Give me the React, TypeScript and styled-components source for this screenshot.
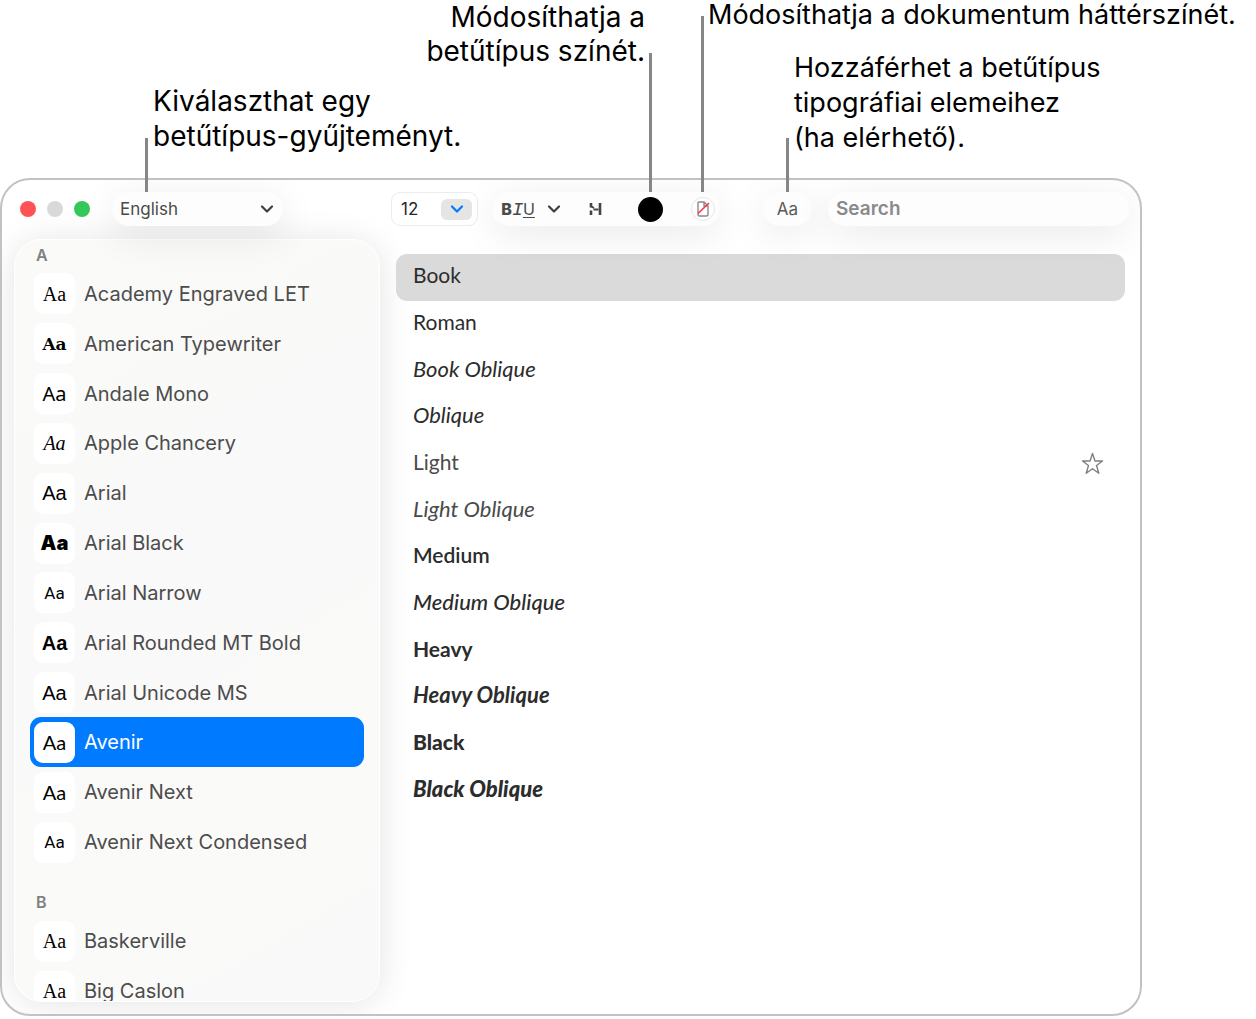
import React from "react";
import styled, { createGlobalStyle } from "styled-components";

const ui = `Inter, "Noto Sans", sans-serif`;

const GlobalStyle = createGlobalStyle`
  *, *::before, *::after { box-sizing: border-box; }
  body { margin: 0; background: #fff; font-family: ${ui}; }
  button, input, select { font: inherit; color: inherit; }
  ul, h2 { margin: 0; padding: 0; }
  ul { list-style: none; }
`;

const Figure = styled.main`
  position: relative;
  padding: 178px 114px 4px 0;
`;

const Callout = styled.p<{
  $left: number;
  $top: number;
  $width: number;
  $size?: number;
  $leading?: number;
  $align?: string;
}>`
  position: absolute;
  left: ${(p) => p.$left}px;
  top: ${(p) => p.$top}px;
  width: ${(p) => p.$width}px;
  margin: 0;
  text-align: ${(p) => p.$align ?? "left"};
  white-space: nowrap;
  font-size: ${(p) => p.$size ?? 27}px;
  line-height: ${(p) => p.$leading ?? 35}px;
  color: #000;
`;

const Leader = styled.span<{ $left: number; $top: number }>`
  position: absolute;
  z-index: 3;
  left: ${(p) => p.$left}px;
  top: ${(p) => p.$top}px;
  width: 3px;
  height: ${(p) => 192 - p.$top}px;
  background: #868686;
`;

const Window = styled.section`
  border: 2px solid #c2c2c2;
  border-radius: 30px;
  background: #fff;
  overflow: hidden;
`;

const Toolbar = styled.header`
  position: relative;
  z-index: 2;
  display: flex;
  align-items: center;
  height: 58px;
  padding: 0 11px 0 18px;
`;

const Lights = styled.div`
  display: flex;
  gap: 11px;
  margin-right: 22px;
`;

const Light = styled.button<{ $color: string }>`
  width: 16px;
  height: 16px;
  padding: 0;
  border: 0;
  border-radius: 50%;
  background: ${(p) => p.$color};
`;

const Pill = styled.div`
  display: flex;
  align-items: center;
  height: 34px;
  border-radius: 17px;
  background: #fdfdfd;
  box-shadow: 0 8px 38px rgba(0, 0, 0, 0.09);
`;

const SelectPill = styled(Pill)`
  position: relative;
  width: 171px;
  margin-right: 108px;
  svg {
    position: absolute;
    right: 9px;
    pointer-events: none;
  }
`;

const Select = styled.select`
  appearance: none;
  width: 100%;
  height: 100%;
  padding: 0 32px 0 8px;
  border: 0;
  border-radius: 17px;
  background: transparent;
  font-size: 17px;
  color: #4a4a4a;
`;

const SizeBox = styled.div`
  display: flex;
  align-items: center;
  width: 87px;
  height: 34px;
  margin-right: 14px;
  padding: 0 5px 0 9px;
  border: 1px solid #ececec;
  border-radius: 9px;
  background: #fff;
`;

const SizeInput = styled.input`
  flex: 1;
  min-width: 0;
  padding: 0;
  border: 0;
  background: transparent;
  font-size: 17px;
  color: #262626;
`;

const SizeButton = styled.button`
  display: grid;
  place-items: center;
  width: 31px;
  height: 21px;
  padding: 0;
  border: 0;
  border-radius: 6px;
  background: #e5e5e5;
`;

const FormatPill = styled(Pill)`
  width: 228px;
  margin-right: 43px;
  padding: 0 4px 0 9px;
`;

const ToolButton = styled.button<{ $gap?: number }>`
  display: flex;
  align-items: center;
  padding: 0;
  margin-right: ${(p) => p.$gap ?? 0}px;
  border: 0;
  background: transparent;
  color: #4a4a4a;
`;

const StyleGroup = styled.span`
  display: flex;
  align-items: baseline;
`;

const Style = styled.span<{ $kind: "b" | "i" | "u" }>`
  width: 11px;
  text-align: center;
  font-size: ${(p) => (p.$kind === "i" ? 19 : 16)}px;
  line-height: 18px;
  font-family: ${(p) => (p.$kind === "i" ? `"Liberation Mono", monospace` : ui)};
  font-weight: ${(p) => (p.$kind === "b" ? 800 : 400)};
  font-style: ${(p) => (p.$kind === "i" ? "italic" : "normal")};
  text-decoration: ${(p) => (p.$kind === "u" ? "underline" : "none")};
  text-underline-offset: 2px;
`;

const InkDot = styled.span`
  width: 25px;
  height: 25px;
  border-radius: 50%;
  background: #000;
`;

const PageDot = styled.span`
  display: grid;
  place-items: center;
  width: 24px;
  height: 24px;
  border: 1px solid #e6e6e6;
  border-radius: 50%;
  background: #fff;
`;

const TypographyButton = styled(Pill).attrs({ as: "button" })`
  justify-content: center;
  width: 49px;
  margin-right: 16px;
  padding: 0;
  border: 0;
  font-size: 17px;
  color: #5a5a5a;
`;

const SearchPill = styled(Pill).attrs({ as: "label" })`
  flex: 1;
`;

const SearchInput = styled.input`
  width: 100%;
  padding: 0 8px 2px;
  border: 0;
  background: transparent;
  font-size: 19px;
  font-weight: 600;
  &::placeholder {
    color: #8a8a8a;
    opacity: 1;
  }
`;

const Body = styled.div`
  display: flex;
  align-items: flex-start;
  padding-top: 1px;
`;

const Sidebar = styled.nav`
  flex: none;
  width: 366px;
  height: 763px;
  margin: 0 0 12px 12px;
  padding: 0 15px;
  border: 1px solid #fff;
  border-radius: 28px;
  background: linear-gradient(150deg, #fafaf8, #f9f9f9 40%, #fafaf9 75%, #f9f9f9);
  box-shadow: 0 2px 34px rgba(0, 0, 0, 0.11);
  overflow: hidden;
`;

const Letter = styled.h2`
  height: 29px;
  padding: 4px 0 0 6px;
  font-size: 16px;
  line-height: 22px;
  font-weight: 600;
  color: #808080;
`;

const FamilyList = styled.ul<{ $height?: number }>`
  display: grid;
  grid-auto-rows: ${(p) => (p.$height ? "1fr" : "50px")};
  height: ${(p) => (p.$height ? `${p.$height}px` : "auto")};
  margin-bottom: 20px;
`;

const Family = styled.button<{ $selected: boolean }>`
  display: flex;
  align-items: center;
  gap: 9px;
  width: 100%;
  height: 100%;
  padding: 4px;
  border: 0;
  border-radius: 11px;
  background: ${(p) => (p.$selected ? "#007aff" : "transparent")};
  color: ${(p) => (p.$selected ? "#fff" : "#4c4c4c")};
  font-size: 20px;
  line-height: 24px;
  text-align: left;
  white-space: nowrap;
`;

const Tile = styled.span<{ $font: string; $weight?: number; $italic?: boolean; $small?: boolean }>`
  display: grid;
  place-items: center;
  width: 41px;
  height: 41px;
  border-radius: 9px;
  background: #fff;
  color: #000;
  font-family: ${(p) => p.$font};
  font-weight: ${(p) => p.$weight ?? 400};
  font-style: ${(p) => (p.$italic ? "italic" : "normal")};
  font-size: ${(p) => (p.$small ? 17 : 20)}px;
  line-height: 24px;
`;

const Faces = styled.ul`
  display: grid;
  grid-auto-rows: 1fr;
  flex: 1;
  height: 560px;
  margin: 15px 15px 0 16px;
`;

const FaceRow = styled.li<{ $selected: boolean }>`
  display: flex;
  align-items: center;
  padding-right: 21px;
  border-radius: 11px;
  background: ${(p) => (p.$selected ? "#dadada" : "transparent")};
`;

const FaceButton = styled.button<{ $weight: number; $italic: boolean; $light: boolean }>`
  flex: 1;
  padding: 0 0 4px 17px;
  border: 0;
  background: transparent;
  text-align: left;
  font-family: Lato, sans-serif;
  font-size: ${(p) => (p.$italic ? 22 : 21)}px;
  line-height: 26px;
  font-weight: ${(p) => p.$weight};
  font-style: ${(p) => (p.$italic ? "italic" : "normal")};
  color: ${(p) => (p.$light ? "#4a4a4a" : "#2c2c2c")};
`;

const StarButton = styled.button`
  display: flex;
  padding: 0;
  border: 0;
  background: transparent;
  color: #808080;
`;

const Chevron = ({ color = "#3f3f3f" }: { color?: string }) => (
  <svg width="14" height="10" viewBox="0 0 14 10" fill="none" aria-hidden="true">
    <path d="M2 2.5 7 7.5 12 2.5" stroke={color} strokeWidth="2.2" strokeLinecap="round" strokeLinejoin="round" />
  </svg>
);

const sans = `"Liberation Sans", Arial, sans-serif`;
const serif = `"Liberation Serif", serif`;

type FamilyItem = { name: string; font: string; weight?: number; italic?: boolean; small?: boolean };

const familiesA: FamilyItem[] = [
  { name: "Academy Engraved LET", font: serif },
  { name: "American Typewriter", font: `"DejaVu Serif", serif`, weight: 700, small: true },
  { name: "Andale Mono", font: `"Noto Sans", sans-serif` },
  { name: "Apple Chancery", font: serif, italic: true },
  { name: "Arial", font: sans },
  { name: "Arial Black", font: ui, weight: 900 },
  { name: "Arial Narrow", font: `"Liberation Sans Narrow", Roboto, sans-serif`, small: true },
  { name: "Arial Rounded MT Bold", font: sans, weight: 700 },
  { name: "Arial Unicode MS", font: sans },
  { name: "Avenir", font: "Lato, sans-serif" },
  { name: "Avenir Next", font: "Lato, sans-serif" },
  { name: "Avenir Next Condensed", font: `"Liberation Sans Narrow", Roboto, sans-serif`, small: true },
];

const familiesB: FamilyItem[] = [
  { name: "Baskerville", font: serif },
  { name: "Big Caslon", font: serif },
];

const faces = [
  { name: "Book", weight: 400 },
  { name: "Roman", weight: 400 },
  { name: "Book Oblique", weight: 400 },
  { name: "Oblique", weight: 400 },
  { name: "Light", weight: 400 },
  { name: "Light Oblique", weight: 400 },
  { name: "Medium", weight: 600 },
  { name: "Medium Oblique", weight: 500 },
  { name: "Heavy", weight: 700 },
  { name: "Heavy Oblique", weight: 700 },
  { name: "Black", weight: 900 },
  { name: "Black Oblique", weight: 900 },
];

const Families = ({ items, height }: { items: FamilyItem[]; height?: number }) => (
  <FamilyList $height={height}>
    {items.map((f) => (
      <li key={f.name}>
        <Family $selected={f.name === "Avenir"}>
          <Tile $font={f.font} $weight={f.weight} $italic={f.italic} $small={f.small}>Aa</Tile>
          {f.name}
        </Family>
      </li>
    ))}
  </FamilyList>
);

export default function App() {
  return (
    <>
      <GlobalStyle />
      <Figure>
        <Callout $left={153} $top={84} $width={309} $size={28}>
          Kiválaszthat egy<br />betűtípus-gyűjteményt.
        </Callout>
        <Callout $left={424} $top={0} $width={221} $size={28} $leading={34} $align="right">
          Módosíthatja a<br />betűtípus színét.
        </Callout>
        <Callout $left={708} $top={0} $width={540} $leading={29}>
          Módosíthatja a dokumentum háttérszínét.
        </Callout>
        <Callout $left={794} $top={50} $width={308}>
          Hozzáférhet a betűtípus<br />tipográfiai elemeihez<br />(ha elérhető).
        </Callout>
        <Leader $left={145} $top={138} />
        <Leader $left={649} $top={53} />
        <Leader $left={701} $top={16} />
        <Leader $left={786} $top={138} />

        <Window>
          <Toolbar>
            <Lights>
              <Light $color="#ff5257" aria-label="Close" />
              <Light $color="#d9d9d9" aria-label="Minimize" />
              <Light $color="#34c759" aria-label="Zoom" />
            </Lights>
            <SelectPill>
              <Select aria-label="Collection" defaultValue="English">
                <option>English</option>
              </Select>
              <Chevron />
            </SelectPill>
            <SizeBox>
              <SizeInput aria-label="Size" defaultValue="12" />
              <SizeButton aria-label="Choose size">
                <Chevron color="#007aff" />
              </SizeButton>
            </SizeBox>
            <FormatPill>
              <ToolButton $gap={28} aria-label="Text style">
                <StyleGroup>
                  <Style $kind="b">B</Style>
                  <Style $kind="i">I</Style>
                  <Style $kind="u">U</Style>
                </StyleGroup>
                <svg width="27" height="10" viewBox="0 0 27 10" fill="none" aria-hidden="true">
                  <path d="M15 2.5 20 7.5 25 2.5" stroke="#3f3f3f" strokeWidth="2.2" strokeLinecap="round" strokeLinejoin="round" />
                </svg>
              </ToolButton>
              <ToolButton $gap={36} aria-label="Strikethrough">
                <svg width="13" height="14" viewBox="0 0 13 14" fill="none" aria-hidden="true">
                  <path d="M2 1V5.500M2 8.500V13M11 1V13" stroke="#444" strokeWidth="2.600" />
                  <path d="M2.500 4.500 5 6M4.500 7.500H9.500" stroke="#444" strokeWidth="2" />
                </svg>
              </ToolButton>
              <ToolButton $gap={28} aria-label="Text color">
                <InkDot />
              </ToolButton>
              <ToolButton aria-label="Document color">
                <PageDot>
                  <svg width="14" height="16" viewBox="0 0 14 16" fill="none" aria-hidden="true">
                    <path d="M3 1H8L12 5V13.500Q12 15 10.500 15H3.500Q2 15 2 13.500V2Q2 1 3 1ZM8 1V5H12" stroke="#8a8a8a" strokeWidth="1.400" />
                    <path d="M2 12.500 13 2" stroke="#ff3b4a" strokeWidth="1.700" />
                  </svg>
                </PageDot>
              </ToolButton>
            </FormatPill>
            <TypographyButton>Aa</TypographyButton>
            <SearchPill>
              <SearchInput type="search" placeholder="Search" aria-label="Search" />
            </SearchPill>
          </Toolbar>

          <Body>
            <Sidebar>
              <Letter>A</Letter>
              <Families items={familiesA} height={598} />
              <Letter>B</Letter>
              <Families items={familiesB} />
            </Sidebar>
            <Faces>
              {faces.map((f) => (
                <FaceRow key={f.name} $selected={f.name === "Book"}>
                  <FaceButton
                    $weight={f.weight}
                    $italic={f.name.includes("Oblique")}
                    $light={f.name.startsWith("Light")}
                  >
                    {f.name}
                  </FaceButton>
                  {f.name === "Light" && (
                    <StarButton aria-label="Add to favorites">
                      <svg width="23" height="23" viewBox="0 0 23 23" fill="none" aria-hidden="true">
                        <path d="M11.500 1.500 14 9H21.500L15.500 13.500 17.800 21.300 11.500 16.700 5.200 21.300 7.500 13.500 1.500 9H9Z" stroke="currentColor" strokeWidth="1.400" strokeLinejoin="round" />
                      </svg>
                    </StarButton>
                  )}
                </FaceRow>
              ))}
            </Faces>
          </Body>
        </Window>
      </Figure>
    </>
  );
}
